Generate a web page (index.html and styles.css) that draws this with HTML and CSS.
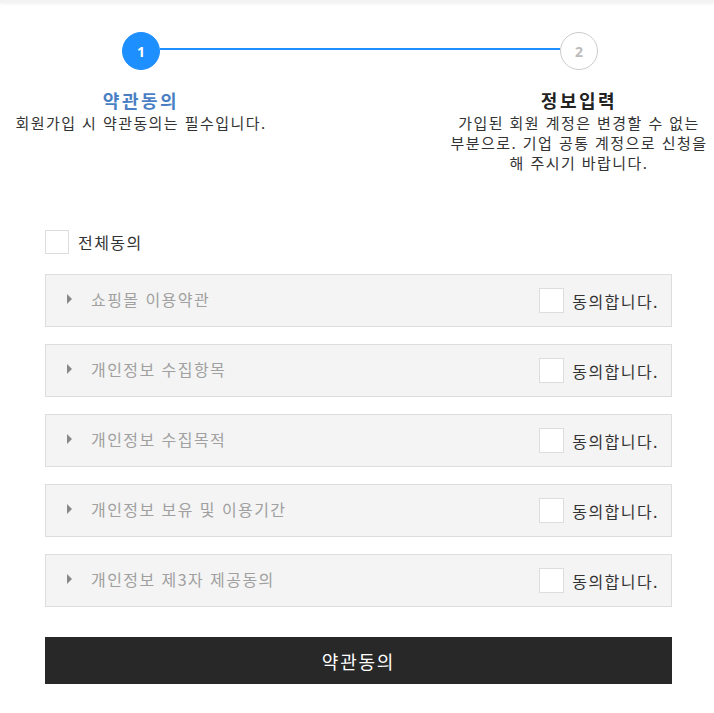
FILE: index.html
```html
<!DOCTYPE html>
<html lang="ko">

<head>
    <meta charset="UTF-8" />
    <meta name="viewport" content="width=device-width, initial-scale=1" />
    <title>회원가입 - 약관동의</title>
    <link rel="stylesheet" href="styles.css">
</head>

<body>
    <div class="top-bar"></div>

    <main class="join">
        <!-- 단계 표시 -->
        <div class="progress">
            <span class="step-num active">1</span>
            <span class="progress-line"></span>
            <span class="step-num">2</span>
        </div>

        <ul class="step-list">
            <li class="step active">
                <strong class="step-title">약관동의</strong>
                <p class="step-desc">회원가입 시 약관동의는 필수입니다.</p>
            </li>
            <li class="step">
                <strong class="step-title">정보입력</strong>
                <p class="step-desc">가입된 회원 계정은 변경할 수 없는 부분으로. 기업 공통 계정으로 신청을 해 주시기 바랍니다.</p>
            </li>
        </ul>

        <form class="agree-form" onsubmit="return false;">
            <label class="check-all">
                <input type="checkbox" class="check-box">
                <span>전체동의</span>
            </label>

            <ul class="terms">
                <li class="term">
                    <span class="term-title"><i class="arrow"></i>쇼핑몰 이용약관</span>
                    <label class="term-agree"><input type="checkbox" class="check-box">동의합니다.</label>
                </li>
                <li class="term">
                    <span class="term-title"><i class="arrow"></i>개인정보 수집항목</span>
                    <label class="term-agree"><input type="checkbox" class="check-box">동의합니다.</label>
                </li>
                <li class="term">
                    <span class="term-title"><i class="arrow"></i>개인정보 수집목적</span>
                    <label class="term-agree"><input type="checkbox" class="check-box">동의합니다.</label>
                </li>
                <li class="term">
                    <span class="term-title"><i class="arrow"></i>개인정보 보유 및 이용기간</span>
                    <label class="term-agree"><input type="checkbox" class="check-box">동의합니다.</label>
                </li>
                <li class="term">
                    <span class="term-title"><i class="arrow"></i>개인정보 제3자 제공동의</span>
                    <label class="term-agree"><input type="checkbox" class="check-box">동의합니다.</label>
                </li>
            </ul>

            <button type="submit" class="btn-agree">약관동의</button>
        </form>
    </main>
</body>

</html>
```

FILE: styles.css
```css
* {
    margin: 0;
    padding: 0;
    box-sizing: border-box;
}

body {
    font-family: 'Noto Sans CJK KR', 'Noto Sans', sans-serif;
    background-color: #fff;
    color: #333;
    letter-spacing: 0.09em;
    overflow-x: hidden;
}

ul {
    list-style: none;
}

.top-bar {
    height: 3px;
    background-color: #f3f3f3;
    box-shadow: 0 1px 3px rgba(0, 0, 0, 0.06);
}

/* 단계 표시 */
.progress {
    display: flex;
    align-items: flex-start;
    padding: 29px 0 0 122px;
}

.step-num {
    display: flex;
    align-items: center;
    justify-content: center;
    width: 38px;
    height: 38px;
    border-radius: 50%;
    border: 1px solid #ccc;
    background-color: #fff;
    color: #bbb;
    font-family: 'Open Sans', sans-serif;
    font-size: 14px;
    font-weight: bold;
    letter-spacing: 0;
}

.step-num.active {
    border-color: #1e8fff;
    background-color: #1e8fff;
    color: #fff;
}

.progress-line {
    width: 400px;
    height: 2px;
    margin-top: 16px;
    background-color: #1e8fff;
}

.step-list {
    display: grid;
    grid-template-columns: 282px 270px;
    column-gap: 162px;
    margin-top: 17px;
    text-align: center;
}

.step {
    display: flex;
    flex-direction: column;
    align-items: center;
}

.step-title {
    display: block;
    font-size: 18px;
    line-height: 26px;
    font-weight: bold;
    letter-spacing: 0.14em;
    color: #222;
}

.step.active .step-title {
    color: #4a7fc4;
}

.step-desc {
    width: 260px;
    font-size: 15px;
    line-height: 20px;
    color: #333;
}

/* 약관 */
.agree-form {
    margin: 57px 42px 0 45px;
}

.check-box {
    appearance: none;
    -webkit-appearance: none;
    flex-shrink: 0;
    width: 25px;
    height: 25px;
    border: 1px solid #ddd;
    background-color: #fff;
    cursor: pointer;
}

.check-box:checked {
    border-color: #1e8fff;
    background-color: #1e8fff;
}

.check-all {
    display: flex;
    align-items: center;
    gap: 9px;
    height: 24px;
    margin-bottom: 20px;
    font-size: 16px;
    color: #333;
}

.check-all .check-box {
    width: 24px;
    height: 24px;
}

.terms {
    display: flex;
    flex-direction: column;
    gap: 17px;
    margin-bottom: 30px;
}

.term {
    display: flex;
    align-items: center;
    justify-content: space-between;
    height: 53px;
    padding: 0 12px 0 21px;
    border: 1px solid #ddd;
    background-color: #f4f4f4;
}

.term-title {
    display: flex;
    align-items: center;
    gap: 19px;
    margin-top: -4px;
    font-size: 16px;
    color: #a0a0a0;
}

.arrow {
    width: 0;
    height: 0;
    border-left: 5px solid #888;
    border-top: 5px solid transparent;
    border-bottom: 5px solid transparent;
}

.term-agree {
    display: flex;
    align-items: center;
    gap: 8px;
    font-size: 16px;
    color: #333;
}

.btn-agree {
    display: block;
    width: 100%;
    height: 47px;
    border: none;
    background-color: #282828;
    color: #fff;
    font-family: inherit;
    font-size: 18px;
    letter-spacing: 0.1em;
    cursor: pointer;
}

.btn-agree:hover {
    background-color: #111;
}
```
